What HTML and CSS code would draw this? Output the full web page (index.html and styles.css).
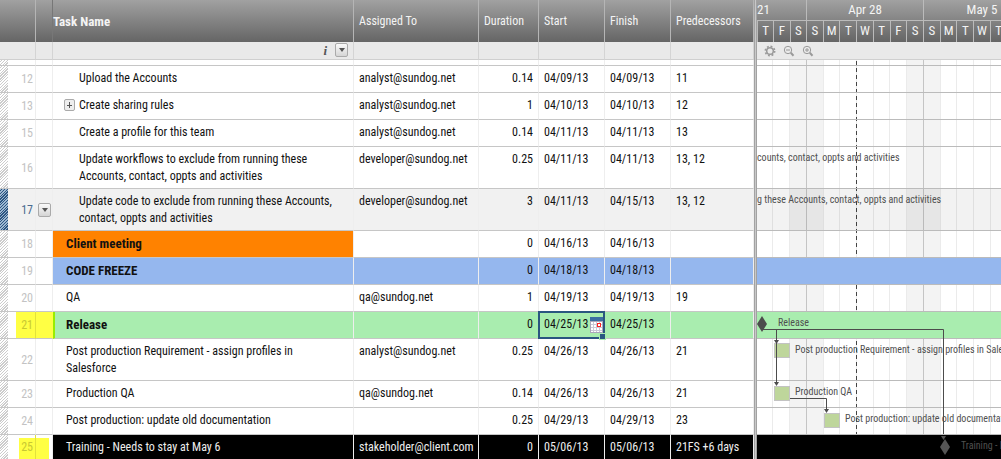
FILE: index.html
```html
<!DOCTYPE html>
<html lang="en">
<head>
<meta charset="utf-8">
<title>Project plan</title>
<link rel="stylesheet" href="styles.css">
</head>
<body>
<main class="app">
<section class="sheet">
<table class="grid">
<colgroup><col class="c-num"><col class="c-menu"><col class="c-task"><col class="c-who"><col class="c-dur"><col class="c-date"><col class="c-date"><col class="c-pred"></colgroup>
<thead>
<tr class="head"><th class="first"></th><th></th><th class="strong">Task Name</th><th>Assigned To</th><th>Duration</th><th>Start</th><th>Finish</th><th>Predecessors</th></tr>
<tr class="filter"><td></td><td></td><td><div class="tools"><span class="info">i</span><button class="drop" aria-label="Filter tasks"></button></div></td><td></td><td></td><td></td><td></td><td></td></tr>
</thead>
<tbody>
<tr class="spacer"><td class="num"></td><td></td><td></td><td></td><td></td><td></td><td></td><td></td></tr>
<tr><td class="num">12</td><td></td><td class="task sub">Upload the Accounts</td><td>analyst@sundog.net</td><td class="dur">0.14</td><td>04/09/13</td><td>04/09/13</td><td>11</td></tr>
<tr><td class="num">13</td><td></td><td class="task sub"><button class="expand" aria-label="Expand"></button>Create sharing rules</td><td>analyst@sundog.net</td><td class="dur">1</td><td>04/10/13</td><td>04/10/13</td><td>12</td></tr>
<tr><td class="num">15</td><td></td><td class="task sub">Create a profile for this team</td><td>analyst@sundog.net</td><td class="dur">0.14</td><td>04/11/13</td><td>04/11/13</td><td>13</td></tr>
<tr class="tall"><td class="num">16</td><td></td><td class="task sub">Update workflows to exclude from running these<br>Accounts, contact, oppts and activities</td><td>developer@sundog.net</td><td class="dur">0.25</td><td>04/11/13</td><td>04/11/13</td><td>13, 12</td></tr>
<tr class="tall active"><td class="num">17</td><td class="menu"><button class="drop" aria-label="Row menu"></button></td><td class="task sub">Update code to exclude from running these Accounts,<br>contact, oppts and activities</td><td>developer@sundog.net</td><td class="dur">3</td><td>04/11/13</td><td>04/15/13</td><td>13, 12</td></tr>
<tr><td class="num">18</td><td></td><td class="task strong orange">Client meeting</td><td></td><td class="dur">0</td><td>04/16/13</td><td>04/16/13</td><td></td></tr>
<tr class="blue"><td class="num">19</td><td></td><td class="task strong">CODE FREEZE</td><td></td><td class="dur">0</td><td>04/18/13</td><td>04/18/13</td><td></td></tr>
<tr><td class="num">20</td><td></td><td class="task">QA</td><td>qa@sundog.net</td><td class="dur">1</td><td>04/19/13</td><td>04/19/13</td><td>19</td></tr>
<tr class="green"><td class="num mark">21</td><td class="mark"></td><td class="task strong edge">Release</td><td></td><td class="dur">0</td><td class="selected">04/25/13<button class="calendar" aria-label="Pick a date"><svg width="13" height="16" viewBox="0 0 13 16"><rect width="13" height="16" fill="#aaa7ba"/><rect y="0" width="13" height="4" fill="#3c6fa1"/><path d="M1 5h11v10H1z" fill="#fff"/><path d="M3.500 5v10M6.500 5v10M9.500 5v10M1 7.500h11M1 10.500h11M1 13.500h11" stroke="#c9c9d8"/><rect x="7.500" y="6.500" width="3" height="3" fill="#fff" stroke="#f22" /></svg></button></td><td>04/25/13</td><td></td></tr>
<tr class="tall"><td class="num">22</td><td></td><td class="task">Post production Requirement - assign profiles in<br>Salesforce</td><td>analyst@sundog.net</td><td class="dur">0.25</td><td>04/26/13</td><td>04/26/13</td><td>21</td></tr>
<tr><td class="num">23</td><td></td><td class="task">Production QA</td><td>qa@sundog.net</td><td class="dur">0.14</td><td>04/26/13</td><td>04/26/13</td><td>21</td></tr>
<tr><td class="num">24</td><td></td><td class="task">Post production: update old documentation</td><td></td><td class="dur">0.25</td><td>04/29/13</td><td>04/29/13</td><td>23</td></tr>
<tr class="black"><td class="num half">25</td><td class="half-end"></td><td class="task">Training - Needs to stay at May 6</td><td>stakeholder@client.com</td><td class="dur">0</td><td>05/06/13</td><td>05/06/13</td><td>21FS +6 days</td></tr>
</tbody>
</table>
</section>
<div class="splitter"></div>
<section class="gantt">
<header class="calendar-head">
<div class="week partial"><b>21</b><i>T</i><i>F</i><i>S</i></div>
<div class="week"><b>Apr 28</b><i>S</i><i>M</i><i>T</i><i>W</i><i>T</i><i>F</i><i>S</i></div>
<div class="week"><b>May 5</b><i>S</i><i>M</i><i>T</i><i>W</i><i>T</i><i>F</i><i>S</i></div>
</header>
<div class="zoombar">
<button aria-label="Settings"><svg width="12" height="12" viewBox="0 0 12 12" fill="none" stroke="#999"><circle cx="6" cy="6" r="3.300" stroke-width="1.500"/><circle cx="6" cy="6" r="4.700" stroke-width="1.600" stroke-dasharray="1.850 1.840"/></svg></button>
<button aria-label="Zoom out"><svg width="12" height="12" viewBox="0 0 12 12" fill="none" stroke="#999"><circle cx="5" cy="5" r="3.700"/><path d="M3 5h4"/><path d="M7.800 7.800l2.700 2.900" stroke-width="2"/></svg></button>
<button aria-label="Zoom in"><svg width="12" height="12" viewBox="0 0 12 12" fill="none" stroke="#999"><circle cx="5" cy="5" r="3.700"/><path d="M3 5h4M5 3v4"/><path d="M7.800 7.800l2.700 2.900" stroke-width="2"/></svg></button>
</div>
<div class="chart">
<svg class="days" width="100%" height="100%" aria-hidden="true">
<defs><pattern id="week" x="49" width="117" height="20" patternUnits="userSpaceOnUse"><path d="M0 0h17v20H0zM100 0h17v20h-17z" fill="#f3f3f3"/><path d="M17.500 0v20M33.500 0v20M50.500 0v20M67.500 0v20M83.500 0v20M100.500 0v20" stroke="#ebebeb"/><path d="M.5 0v20" stroke="#c4c4c4"/></pattern></defs>
<rect width="100%" height="100%" fill="url(#week)"/>
<path d="M99.500 1v420" stroke="#444" stroke-dasharray="4 3"/>
</svg>
<div class="lane spacer"></div>
<div class="lane"></div><div class="lane"></div><div class="lane"></div>
<div class="lane tall"><span class="label">counts, contact, oppts and activities</span></div>
<div class="lane tall active"><span class="label">g these Accounts, contact, oppts and activities</span></div>
<div class="lane"></div>
<div class="lane blue"></div>
<div class="lane"></div>
<div class="lane green"><span class="label at-release">Release</span></div>
<div class="lane tall"><span class="label at-friday">Post production Requirement - assign profiles in Salesforce</span></div>
<div class="lane"><span class="label at-friday">Production QA</span></div>
<div class="lane"><span class="label at-monday">Post production: update old documentation</span></div>
<div class="lane black"><span class="label at-training">Training - Needs to stay at May 6</span></div>
<svg class="links" width="100%" height="100%" aria-hidden="true">
<g fill="#bed69b" stroke="#c3c3c3"><rect x="17.500" y="283.500" width="15" height="14"/><rect x="17.500" y="326.500" width="15" height="14"/><rect x="67.500" y="353.500" width="15" height="14"/></g>
<g fill="none" stroke="#4c4c4c"><path d="M6 269.500H186.500V374"/><path d="M19.500 269.500V325"/><path d="M33 338.500H69.500V351"/></g>
<g fill="#4c4c4c"><path d="M17 280h5l-2.500 4zM17 322h5l-2.500 4zM67 349h5l-2.500 4z"/><path d="M5 256l5 8-5 8-5-8z"/><path d="M184 376h5l-2.500 4zM188 379l5 8-5 8-5-8z" fill="#555"/></g>
</svg>
</div>
</section>
</main>
</body>
</html>
```

FILE: styles.css
```css
* { box-sizing: border-box; }
body {
  margin: 0;
  overflow: hidden;
  background: #fff;
  color: #111;
  font: 12px/17px "Roboto Condensed", "Liberation Sans Narrow", Roboto, "Liberation Sans", Arial, sans-serif;
}
button { margin: 0; padding: 0; border: 0; background: none; }
svg { display: block; }
.app { display: flex; min-height: 100vh; }
.sheet { flex: none; }
.grid { width: 754px; table-layout: fixed; border-spacing: 0; }
.c-num { width: 36px; }
.c-menu { width: 17px; }
.c-task { width: 301px; }
.c-who { width: 125px; }
.c-dur { width: 60px; }
.c-date { width: 66px; }
.c-pred { width: 83px; }

.head { background: linear-gradient(#a1a1a1, #656565); }
.head th {
  height: 42px;
  padding: 0 5px;
  border-right: 1px solid #b5b5b5;
  color: #f4f4f4;
  font-weight: normal;
  text-align: left;
  white-space: nowrap;
}
.head th.strong { padding: 0; font-size: 13px; font-weight: bold; }
.head th:nth-child(2) { border-color: #777; }
.filter { background: #e9e9e9; }
.filter td {
  height: 18px;
  padding: 0;
  border-right: 1px solid #d4d4d4;
  border-bottom: 1px solid #cfcfcf;
}
.tools { display: flex; justify-content: flex-end; gap: 8px; padding-right: 5px; }
.info { color: #555; font: italic bold 13px/15px "Liberation Serif", serif; }
.drop {
  display: grid;
  place-items: center;
  width: 13px;
  height: 14px;
  border: 1px solid #aaa;
  border-radius: 2px;
  background: linear-gradient(#fafafa, #d5d5d5);
}
.drop::after { content: ""; border: 3px solid transparent; border-top: 4px solid #555; border-bottom: 0; }

tbody td {
  height: 27px;
  padding: 4px 5px 3px;
  border-right: 1px solid #eee;
  border-bottom: 1px solid #c6c6c6;
  vertical-align: top;
  white-space: nowrap;
  overflow: hidden;
}
tbody .spacer td { height: 6px; padding: 0; }
tbody td.task { padding-left: 13px; }
tbody td.task.sub { padding-left: 26px; }
td.strong { font-size: 13px; font-weight: bold; }
.dur { text-align: right; }
tbody td.num {
  padding-right: 2px;
  background: repeating-linear-gradient(135deg, #fff 0 1px, #ccc 1px 2px) 0 0 / 8px 100% no-repeat;
  color: #c3c3c3;
  font-size: 12px;
  text-align: right;
  vertical-align: middle;
}
.active { background: #f1f1f1; }
tbody .active td.num {
  background: repeating-linear-gradient(135deg, #9db8d2 0 1px, #2c5581 1px 2px) 0 0 / 8px 100% no-repeat;
  color: #4a6a90;
}
tbody td.menu { padding: 0 0 0 2px; vertical-align: middle; }
.expand {
  float: left;
  width: 11px;
  height: 12px;
  margin: 2px 0 0 -15px;
  border: 1px solid #aaa;
  border-radius: 2px;
  background:
    linear-gradient(#555, #555) center / 5px 1px no-repeat,
    linear-gradient(#555, #555) center / 1px 6px no-repeat,
    #eee;
}
.orange { background: #ff8200; }
.blue td:nth-child(n+3), .lane.blue { background: #95b7ee; }
.green td:nth-child(n+3), .lane.green { background: #a9edaf; }
.black td:nth-child(n+3), .lane.black { background: #000; color: #eee; }
.green td.task.edge { border-left: 2px solid #99ed00; padding-left: 11px; }
tbody td.num.mark {
  background:
    linear-gradient(#ff4, #ff4) 16px 0 / 20px 100% no-repeat,
    repeating-linear-gradient(135deg, #fff 0 1px, #ccc 1px 2px) 0 0 / 8px 100% no-repeat;
  border-right-color: #e2e23c;
  color: #c8c832;
}
td.mark { background: #ff4; border-right-color: #ff4; }
tbody td.num.half {
  background:
    linear-gradient(#ff4, #ff4) 19px 3px / 17px 100% no-repeat,
    repeating-linear-gradient(135deg, #fff 0 1px, #ccc 1px 2px) 0 0 / 8px 100% no-repeat;
  border-right-color: #e2e23c;
  color: #c8c832;
}
td.half-end { background: linear-gradient(#ff4, #ff4) 0 3px / 13px 100% no-repeat; }
tbody .black td { height: 25px; }
tbody td.selected { position: relative; overflow: visible; }
.selected::before { content: ""; position: absolute; inset: -1px -1px -1px -1px; border: 2px solid #2a5680; }
.selected::after {
  content: "";
  position: absolute;
  right: -2px;
  bottom: -2px;
  width: 5px;
  height: 5px;
  border: 1px solid #a9edaf;
  background: #2a5680;
}
.calendar { position: absolute; right: 1px; top: 5px; }

.splitter { flex: none; width: 3px; border: solid #a2a2a2; border-width: 0 1px; background: #c8c8c8; }
.gantt { flex: 1; min-width: 0; overflow: hidden; }
.calendar-head {
  display: flex;
  height: 42px;
  background: linear-gradient(#a1a1a1, #656565);
  color: #f4f4f4;
}
.week {
  flex: none;
  display: grid;
  grid-template: 21px 21px / repeat(7, 1fr);
  width: 117px;
  font-size: 13px;
  line-height: 20px;
  text-align: center;
}
.week b { grid-column: span 7; border-left: 1px solid #bbb; border-bottom: 1px solid #bbb; font-weight: normal; }
.week i { border-left: 1px solid #bbb; font-style: normal; }
.week.partial { grid-template-columns: repeat(3, 1fr); width: 49px; }
.week.partial b { grid-column: span 3; border-left: 0; text-align: left; }
.zoombar {
  display: flex;
  gap: 7px;
  height: 18px;
  padding: 2px 7px;
  border-bottom: 1px solid #cfcfcf;
  background: #e9e9e9;
}
.chart { position: relative; }
.days, .links { position: absolute; inset: 0; }
.lane { position: relative; display: flex; height: 27px; border-bottom: 1px solid #bbb; }
.lane.spacer { height: 6px; }
.lane.tall { height: 42px; }
.lane.active { background: rgb(0 0 0 / 5%); }
.lane.black { height: 25px; }
.label { flex: none; color: #505050; font-size: 10px; line-height: 22px; white-space: nowrap; }
.at-release { padding-left: 21px; }
.at-friday { padding-left: 38px; }
.at-monday { padding-left: 88px; }
.at-training { padding-left: 204px; }
```
